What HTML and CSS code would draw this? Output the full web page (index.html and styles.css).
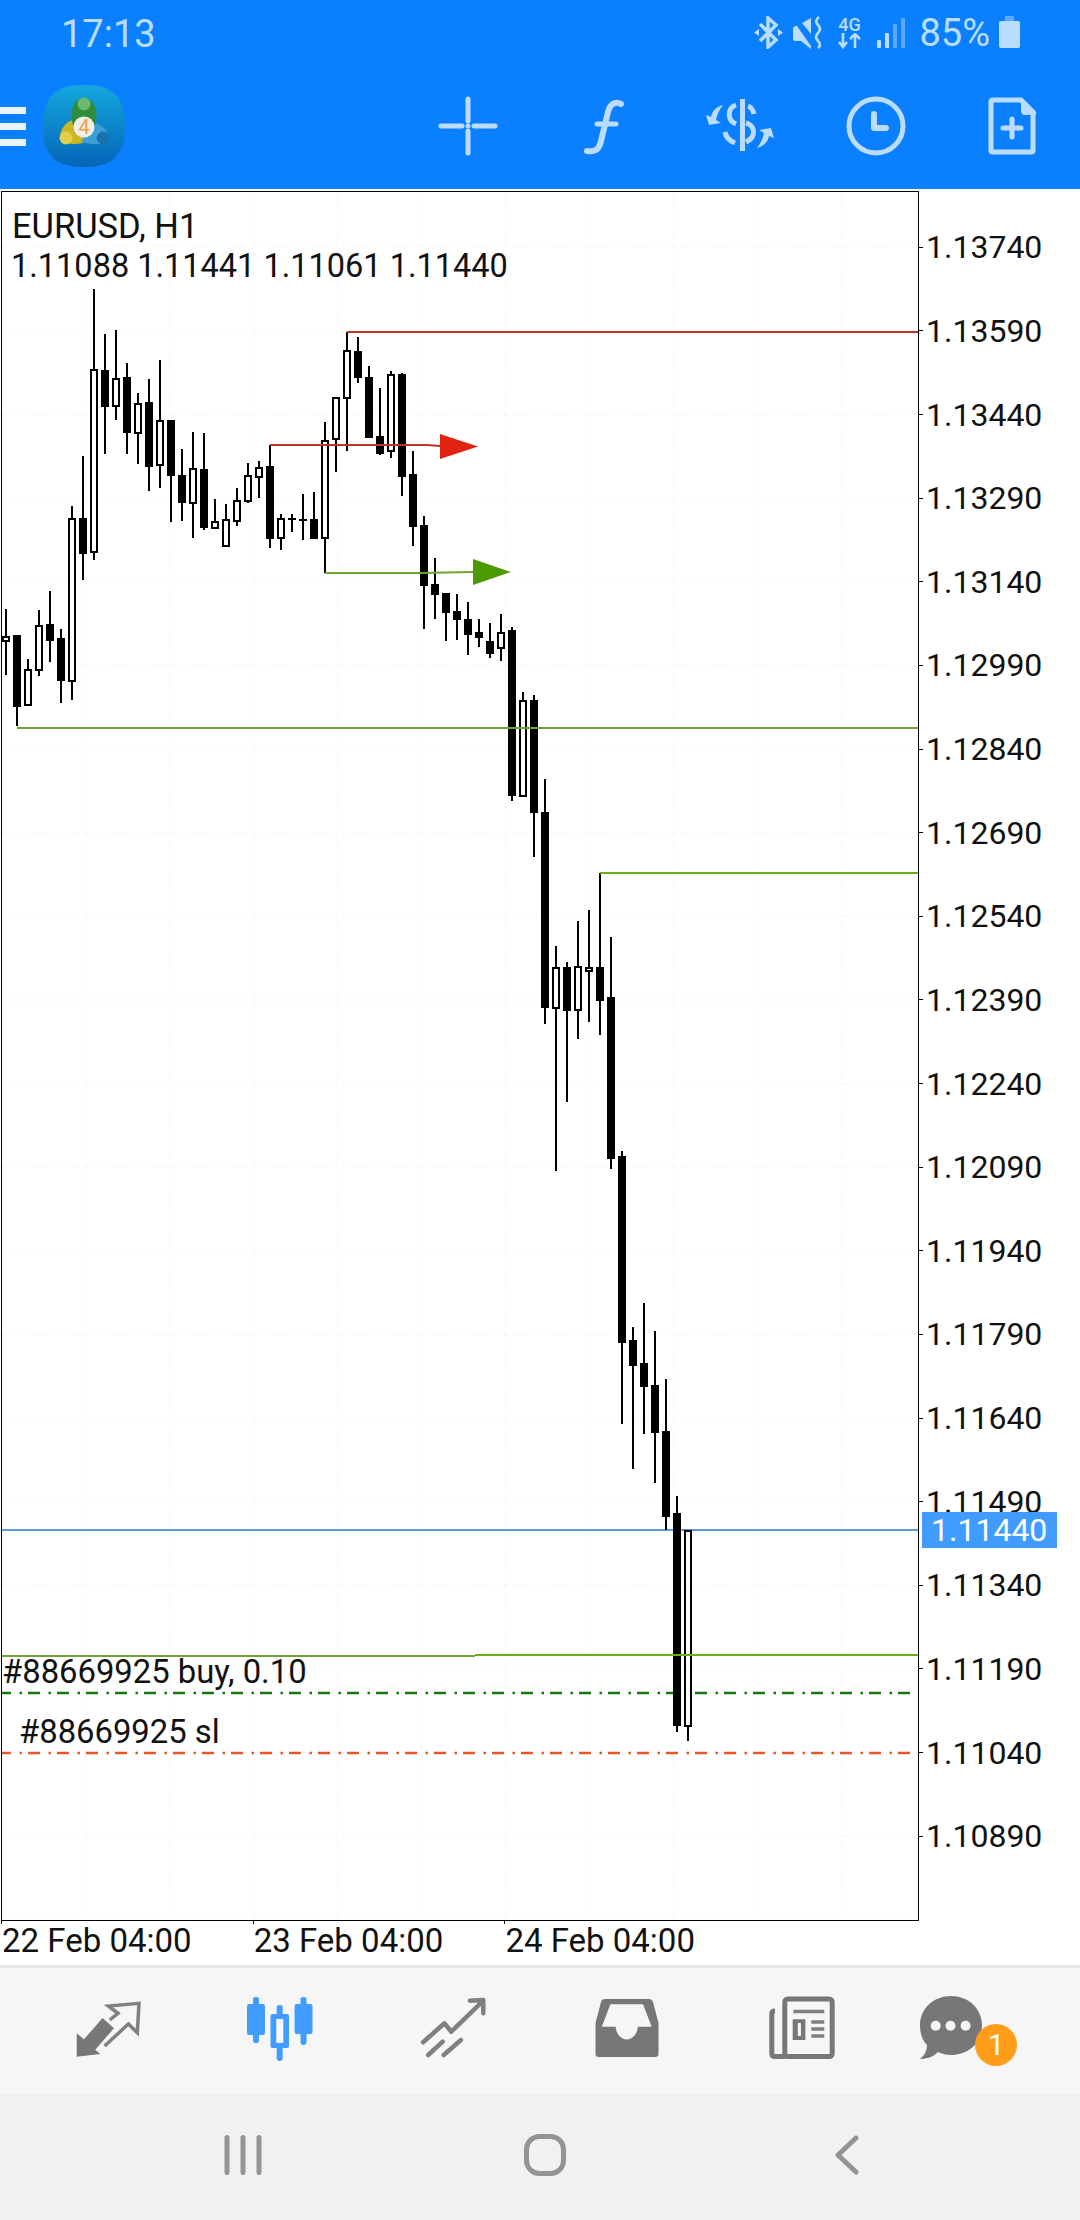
FILE: index.html
```html
<!DOCTYPE html>
<html lang="en">
<head>
    <meta charset="UTF-8">
    <title>EURUSD, H1</title>
    <meta name="viewport" content="width=device-width, initial-scale=1">
    <link rel="stylesheet" href="styles.css">
</head>
<body>
    <div class="status-bar">
        <span class="status-time">17:13</span>
        <div class="status-icons">
            <svg class="icon-bt" viewBox="0 0 30 33" width="30" height="33">
                <path class="st-line" d="M6 8 L22 24 L14 31 V2 L22 9 L6 25"/>
                <path class="st-fill" d="M0 16.5 L5 13 V20Z M29 16.5 L24 13 V20Z"/>
            </svg>
            <svg class="icon-mute" viewBox="0 0 31 33" width="31" height="33">
                <path class="st-fill" d="M1 13 Q1 11 3 10 L5 10 L19 30 V33 L9 25 H3 Q1 25 1 23Z M19 2 V18 L10 7Z"/>
                <path class="st-line thin" d="M27 1 Q22 5 26 9 T26 17 T26 25 T26 32"/>
            </svg>
            <div class="net-type">
                <span>4G</span>
                <svg viewBox="0 0 24 16" width="24" height="16">
                    <path class="st-line thin" d="M6 0 V14 M2 9 L6 14 L10 9 M18 15 V1 M13 6 L18 1 L23 6"/>
                </svg>
            </div>
            <svg class="icon-signal" viewBox="0 0 28 33" width="28" height="33">
                <rect class="st-fill" x="0" y="24" width="4" height="8" rx="1"/>
                <rect class="st-fill" x="8" y="17" width="4" height="15" rx="1"/>
                <rect class="st-dim" x="16" y="8" width="4" height="24" rx="1"/>
                <rect class="st-dim" x="24" y="2" width="4" height="30" rx="1"/>
            </svg>
            <span class="status-batt">85%</span>
            <svg class="icon-batt" viewBox="0 0 21 33" width="21" height="33">
                <path class="st-dim" d="M6 0 H15 V5 H6Z"/>
                <rect class="st-fill" x="0" y="5" width="21" height="27" rx="2"/>
            </svg>
        </div>
    </div>

    <div class="toolbar">
        <div class="menu-btn"><span></span><span></span><span></span></div>
        <svg class="app-logo" viewBox="0 0 82 82" width="82" height="82">
            <defs>
                <linearGradient id="logo-bg" x1="0" y1="0" x2="0" y2="1">
                    <stop offset="0" stop-color="#13a8de"/>
                    <stop offset="1" stop-color="#0564b6"/>
                </linearGradient>
            </defs>
            <path fill="url(#logo-bg)" d="M41 0 C70 0 82 12 82 41 C82 70 70 82 41 82 C12 82 0 70 0 41 C0 12 12 0 41 0Z"/>
            <path fill="#cdb524" d="M30 35 C22 37 17 45 17 52 C20 60 36 61 44 56 L38 44Z"/>
            <circle fill="#e3d04a" cx="23" cy="53" r="6.5"/>
            <path fill="#3d9fd6" d="M53 38 C62 42 67 49 65 55 C60 61 46 60 38 56 L47 45Z"/>
            <circle fill="#1872ad" cx="60" cy="53" r="6.5"/>
            <path fill="#2f8c3f" d="M41 13 C52 13 56 28 52 40 L30 40 C26 28 30 13 41 13Z"/>
            <circle fill="#6cb96f" cx="41" cy="19" r="6.5"/>
            <circle fill="#f1efe9" cx="41" cy="42" r="10.5"/>
            <text class="logo-four" x="41" y="49">4</text>
        </svg>
        <div class="tool-btns">
            <div class="tool-btn">
                <svg viewBox="0 0 70 70" width="70" height="70">
                    <path class="tb-line" d="M35 8 V30 M35 40 V62 M8 35 H29 M41 35 H62"/>
                    <circle class="tb-fill" cx="35" cy="35" r="2.5"/>
                </svg>
            </div>
            <div class="tool-btn">
                <svg viewBox="0 0 70 70" width="70" height="70">
                    <path class="tb-line thick" d="M52 13 C46 10 41 13 39 21 L32 50 C30 59 26 61 18 60"/>
                    <path class="tb-line" d="M28 33 H47"/>
                </svg>
            </div>
            <div class="tool-btn">
                <svg viewBox="0 0 70 70" width="70" height="70">
                    <path class="tb-line flat" d="M37.5 8 V60 M31 14 C22 17 22 29 31 33 M43 15 C46 16 48 19 49 23 M41 32 C50 34 52 46 41 51 M20 41 C21 47 25 50 30 52"/>
                    <path class="tb-fill" d="M18 14 C11 16 7 20 6 26 L1 24 L4 34 L16 32 L11 29 C12 24 14 19 18 14Z"/>
                    <path class="tb-fill" transform="rotate(180 35 35.5)" d="M18 14 C11 16 7 20 6 26 L1 24 L4 34 L16 32 L11 29 C12 24 14 19 18 14Z"/>
                </svg>
            </div>
            <div class="tool-btn">
                <svg viewBox="0 0 70 70" width="70" height="70">
                    <circle class="tb-line" cx="35" cy="35" r="27"/>
                    <path class="tb-line thick" d="M33 23 V37 H45"/>
                </svg>
            </div>
            <div class="tool-btn">
                <svg viewBox="0 0 70 70" width="70" height="70">
                    <path class="tb-line" d="M16 9 H44 L56 21 V59 Q56 61 54 61 H16 Q14 61 14 59 V11 Q14 9 16 9Z"/>
                    <path class="tb-fill" d="M44 6 L59 21 V24 H48 Q44 24 44 20Z"/>
                    <path class="tb-line" d="M35 28 V46 M26 37 H44"/>
                </svg>
            </div>
        </div>
    </div>

    <div class="chart-row">
        <div class="chart-frame">
            <svg id="chart" viewBox="2 192 916 1728" width="916" height="1728">
                <g id="chart-grid"></g>
                <line class="ln-bid" x1="2" y1="1530" x2="918" y2="1530"/>
                <line class="ln-tp" x1="-1" y1="1693" x2="918" y2="1693"/>
                <line class="ln-sl" x1="-1" y1="1753" x2="918" y2="1753"/>
                <g id="chart-candles"></g>
                <line class="ln-red" x1="347" y1="332" x2="918" y2="332"/>
                <path class="ln-red" d="M270 445 H427 L440 446"/>
                <path class="ar-red" d="M440 434 L478 446.5 L440 459Z"/>
                <path class="ln-green-d" d="M325 573 H420 L473 572"/>
                <path class="ar-green" d="M473 559 L511 572 L473 585Z"/>
                <line class="ln-green-d" x1="17" y1="728" x2="918" y2="728"/>
                <line class="ln-green" x1="600" y1="873" x2="918" y2="873"/>
                <line class="ln-green-d" x1="2" y1="1656" x2="475" y2="1656"/>
                <line class="ln-green" x1="475" y1="1655" x2="918" y2="1655"/>
            </svg>
            <div class="chart-label symbol">EURUSD, H1</div>
            <div class="chart-label ohlc">1.11088 1.11441 1.11061 1.11440</div>
            <div class="chart-label order-buy">#88669925 buy, 0.10</div>
            <div class="chart-label order-sl">#88669925 sl</div>
        </div>
        <div class="price-axis">
            <div class="price-row"><i></i>1.13740</div>
            <div class="price-row"><i></i>1.13590</div>
            <div class="price-row"><i></i>1.13440</div>
            <div class="price-row"><i></i>1.13290</div>
            <div class="price-row"><i></i>1.13140</div>
            <div class="price-row"><i></i>1.12990</div>
            <div class="price-row"><i></i>1.12840</div>
            <div class="price-row"><i></i>1.12690</div>
            <div class="price-row"><i></i>1.12540</div>
            <div class="price-row"><i></i>1.12390</div>
            <div class="price-row"><i></i>1.12240</div>
            <div class="price-row"><i></i>1.12090</div>
            <div class="price-row"><i></i>1.11940</div>
            <div class="price-row"><i></i>1.11790</div>
            <div class="price-row"><i></i>1.11640</div>
            <div class="price-row"><i></i>1.11490</div>
            <div class="price-row"><i></i>1.11340</div>
            <div class="price-row"><i></i>1.11190</div>
            <div class="price-row"><i></i>1.11040</div>
            <div class="price-row"><i></i>1.10890</div>
        </div>
        <div class="price-tag">1.11440</div>
    </div>

    <div class="time-axis">
        <div class="time-cell"><i></i>22 Feb 04:00</div>
        <div class="time-cell"><i></i>23 Feb 04:00</div>
        <div class="time-cell"><i></i>24 Feb 04:00</div>
    </div>

    <div class="tab-bar">
        <div class="tab">
            <svg viewBox="0 0 70 70" width="70" height="70">
                <path class="tab-fill" d="M3.7 37.3 L11 43.3 L29.6 22 L40.9 32.3 L22.3 53.7 L27.2 58 L3.7 60.7Z"/>
                <path class="tab-line" d="M31.6 50 L55.4 28 L64.3 36.7 L66 7.3 L35.4 10 L45 17.3 L36.8 24"/>
            </svg>
        </div>
        <div class="tab">
            <svg viewBox="0 0 70 70" width="70" height="70">
                <path class="tab-active" fill-rule="evenodd" d="M7 3 Q7 1 10 1 Q13 1 13 3 V8 H17 Q19 8 19 10 V37 Q19 39 17 39 H13 V45 Q13 47 10 47 Q7 47 7 45 V39 H3 Q1 39 1 37 V10 Q1 8 3 8 H7Z"/>
                <path class="tab-active" fill-rule="evenodd" d="M30.7 11 Q30.7 9 33.7 9 Q36.7 9 36.7 11 V18 H41 Q43 18 43 20 V50 Q43 52 41 52 H36.7 V62 Q36.7 65 33.7 65 Q30.7 65 30.7 62 V52 H26.5 Q24.5 52 24.5 50 V20 Q24.5 18 26.5 18 H30.7Z M30.3 23 V47 H37.3 V23Z"/>
                <path class="tab-active" fill-rule="evenodd" d="M54.5 3 Q54.5 1 57.5 1 Q60.5 1 60.5 3 V8 H64.5 Q66.5 8 66.5 10 V36 Q66.5 38 64.5 38 H60.5 V46 Q60.5 49 57.5 49 Q54.5 49 54.5 46 V38 H50.6 Q48.6 38 48.6 36 V10 Q48.6 8 50.6 8 H54.5Z"/>
            </svg>
        </div>
        <div class="tab">
            <svg viewBox="0 0 70 70" width="70" height="70">
                <path class="tab-line round" d="M3.1 46.3 L24.4 27.3 L31.3 35.7 L62.3 5.7 M49.9 4.7 L63.3 4 V17.3 M8.2 59 L22.7 45.7 M23.7 59 L40.9 44"/>
            </svg>
        </div>
        <div class="tab">
            <svg viewBox="0 0 70 70" width="70" height="70">
                <path class="tab-fill" fill-rule="evenodd" d="M12 3 H56 Q59 3 60 6 L65.5 27 V58 Q65.5 61 62.5 61 H5.5 Q2.5 61 2.5 58 V27 L8 6 Q9 3 12 3Z M17.4 8.3 L8.8 30.7 H22.6 A11.2 14 0 0 0 44.9 30.7 H58.7 L50 8.3Z"/>
            </svg>
        </div>
        <div class="tab">
            <svg viewBox="0 0 70 70" width="70" height="70">
                <rect class="tab-line wide" x="17.8" y="3" width="47.4" height="57.5" rx="3"/>
                <path class="tab-line wide" d="M8 15 Q4.8 15 4.8 18 V57 Q4.8 60.5 8 60.5 H18"/>
                <path class="tab-line" d="M26.4 15.5 H57.3 M44.3 26 H57.3 M44.3 33 H57.3 M44.3 40 H57.3"/>
                <path class="tab-fill" fill-rule="evenodd" d="M25.7 23.3 H38.4 V44 H25.7Z M30.8 27 V40 H33.9 V27Z"/>
            </svg>
        </div>
        <div class="tab tab-chat">
            <svg viewBox="0 0 70 70" width="70" height="70">
                <path class="tab-fill" d="M35 0 C52 0 66 12 66 29.5 C66 47 52 59 35 59 C30 59 26 58 22 56 C17 61 11 63 4 63 C9 59 11 54 11 49 C6 44 4 37 4 29.5 C4 12 18 0 35 0Z"/>
                <circle class="tab-dot" cx="19.7" cy="29.7" r="5"/>
                <circle class="tab-dot" cx="34.5" cy="29.7" r="5"/>
                <circle class="tab-dot" cx="49.6" cy="29.7" r="5"/>
            </svg>
            <span class="tab-badge">1</span>
        </div>
    </div>

    <div class="nav-bar">
        <div class="nav-btn">
            <svg viewBox="0 0 38 40" width="38" height="40">
                <path class="nav-line" d="M3 2.5 V37.5 M19 2.5 V37.5 M35 2.5 V37.5"/>
            </svg>
        </div>
        <div class="nav-btn">
            <svg viewBox="0 0 42 42" width="42" height="42">
                <rect class="nav-line" x="2.5" y="2.5" width="37" height="37" rx="13"/>
            </svg>
        </div>
        <div class="nav-btn">
            <svg viewBox="0 0 24 40" width="24" height="40">
                <path class="nav-line" d="M21 3 L3 20 L21 37"/>
            </svg>
        </div>
    </div>

    <script src="chart.js"></script>
</body>
</html>
```

FILE: styles.css
```css
* {
    box-sizing: border-box;
}
body {
    font-family: Roboto, "Liberation Sans", sans-serif;
    background: #fff;
    color: #111;
    margin: 0;
    padding: 0;
    width: 1080px;
    height: 2220px;
    overflow: hidden;
}
svg {
    display: block;
}

/* status bar */
.status-bar {
    background: #0a80ff;
    color: #b9dcff;
    height: 63px;
    display: flex;
    align-items: center;
    justify-content: space-between;
    padding: 4px 60px 0 61px;
    font-size: 38px;
}
.status-icons {
    display: flex;
    align-items: center;
    margin-top: -2px;
}
.status-icons svg {
    flex: none;
}
.st-fill {
    fill: #b9dcff;
}
.st-dim {
    fill: #5aa9ff;
}
.st-line {
    fill: none;
    stroke: #b9dcff;
    stroke-width: 3.5;
}
.st-line.thin {
    stroke-width: 2.6;
}
.icon-bt {
    margin-right: 8px;
}
.icon-mute {
    margin-right: 14px;
}
.net-type {
    width: 24px;
    height: 33px;
    margin-right: 16px;
    display: flex;
    flex-direction: column;
    align-items: center;
    font-size: 18px;
    line-height: 17px;
    font-weight: 500;
}
.icon-signal {
    margin-right: 14px;
}
.status-batt {
    margin-right: 9px;
}

/* toolbar */
.toolbar {
    background: #0a80ff;
    height: 126px;
    display: flex;
    align-items: center;
}
.menu-btn {
    width: 26px;
    margin-right: 17px;
    display: flex;
    flex-direction: column;
    gap: 9px;
}
.menu-btn span {
    display: block;
    height: 7px;
    background: #eaf4ff;
}
.logo-four {
    fill: #f2a043;
    font-size: 20px;
    text-anchor: middle;
}
.tool-btns {
    margin-left: auto;
    display: flex;
}
.tool-btn {
    width: 136px;
    display: flex;
    justify-content: center;
}
.tb-line {
    fill: none;
    stroke: #bcdcff;
    stroke-width: 5;
    stroke-linecap: round;
    stroke-linejoin: round;
}
.tb-line.thick {
    stroke-width: 6;
}
.tb-line.flat {
    stroke-width: 5;
    stroke-linecap: butt;
}
.tb-fill {
    fill: #bcdcff;
}

/* chart */
.chart-row {
    display: flex;
    margin-top: 2px;
    height: 1730px;
    position: relative;
}
.chart-frame {
    width: 918px;
    height: 1730px;
    margin-left: 1px;
    border: 1px solid #000;
    position: relative;
    flex: none;
}
#chart line, #chart path {
    fill: none;
}
.grid-line {
    stroke: #f7f7f7;
    stroke-width: 1;
    stroke-dasharray: 6 4;
}
.candle {
    shape-rendering: crispEdges;
}
.hollow {
    fill: #fff;
    stroke: #000;
    stroke-width: 2;
}
.ln-bid {
    stroke: #5f9bd8;
    stroke-width: 2;
}
.ln-tp {
    stroke: #13780c;
    stroke-width: 2.5;
    stroke-dasharray: 12 8.5 2.5 6;
}
.ln-sl {
    stroke: #e85628;
    stroke-width: 2.5;
    stroke-dasharray: 12 8.5 2.5 6;
}
#chart .ln-red {
    stroke: #b8362a;
    stroke-width: 2;
}
.ln-green {
    stroke: #6bb015;
    stroke-width: 2;
}
#chart .ln-green-d {
    stroke: #6fa233;
    stroke-width: 2;
}
#chart .ar-red {
    fill: #e0240f;
}
#chart .ar-green {
    fill: #4c9a02;
}
.chart-label {
    position: absolute;
    font-size: 32.5px;
    line-height: 38px;
    white-space: nowrap;
}
.symbol {
    left: 10px;
    top: 15px;
    font-size: 34.5px;
}
.ohlc {
    left: 9px;
    top: 55px;
}
.order-buy {
    left: 0;
    top: 1461px;
    font-size: 32.8px;
}
.order-sl {
    left: 17px;
    top: 1521px;
    font-size: 32.8px;
}

/* price scale */
.price-axis {
    flex: 1;
    padding-top: 14.5px;
    font-size: 32px;
}
.price-row {
    height: 83.63px;
    display: flex;
    align-items: center;
    gap: 3px;
}
.price-row i {
    width: 4px;
    height: 1px;
    background: #000;
}
.price-tag {
    position: absolute;
    left: 922px;
    top: 1321px;
    width: 135px;
    height: 36px;
    background: #409cff;
    color: #fff;
    font-size: 32px;
    line-height: 36px;
    padding-left: 9px;
}

/* time scale */
.time-axis {
    height: 44px;
    display: flex;
    padding-left: 1px;
    font-size: 33px;
}
.time-cell {
    width: 251.7px;
    line-height: 34px;
    padding-left: 1px;
}
.time-cell i {
    display: block;
    width: 1px;
    height: 3px;
    margin-left: -1px;
    background: #000;
}

/* bottom tabs */
.tab-bar {
    height: 129px;
    background: #f6f6f6;
    border-top: 3px solid #e6e6e6;
    padding-left: 21px;
    display: grid;
    grid-template-columns: repeat(6, 173.5px);
    align-items: center;
    justify-items: center;
}
.tab {
    position: relative;
}
.tab-chat {
    margin-right: 48px;
}
.tab-fill {
    fill: #777;
}
.tab-line {
    fill: none;
    stroke: #808080;
    stroke-width: 3.5;
}
.tab-line.round {
    stroke-width: 4.5;
    stroke-linecap: round;
    stroke-linejoin: round;
}
.tab-line.wide {
    stroke: #777;
    stroke-width: 5;
}
.tab-active {
    fill: #409cff;
}
.tab-dot {
    fill: #f6f6f6;
}
.tab-badge {
    position: absolute;
    left: 59px;
    top: 28px;
    width: 42px;
    height: 42px;
    border-radius: 50%;
    background: #ff9d1a;
    color: #fff;
    font-size: 30px;
    line-height: 42px;
    text-align: center;
}

/* android nav */
.nav-bar {
    height: 126px;
    background: #f1f1f1;
    padding: 0 0 4px 92px;
    display: flex;
    align-items: center;
}
.nav-btn {
    width: 302px;
    display: flex;
    justify-content: center;
}
.nav-line {
    fill: none;
    stroke: #949494;
    stroke-width: 5;
    stroke-linecap: round;
    stroke-linejoin: round;
}
```

FILE: chart.js
```js
// one row per bar: high, low, body top, body bottom, black(1) or hollow(0)
// y values are page pixels, bars are 11px apart starting at x=6
const bars = [
    [609,675,636,642,0],[635,726,635,707,1],[659,706,669,706,0],[610,676,625,671,0],
    [591,662,624,641,1],[629,703,638,681,1],[506,700,518,682,0],[456,580,518,554,1],
    [289,560,369,553,0],[334,454,370,407,1],[330,420,378,407,0],[363,454,377,433,1],
    [393,464,403,434,0],[379,491,402,467,1],[360,488,420,466,0],[420,522,420,476,1],
    [449,521,475,503,1],[432,538,468,504,0],[433,530,469,528,1],[499,529,521,529,0],
    [504,547,519,547,0],[488,526,500,522,0],[463,503,475,502,0],[461,498,467,478,0],
    [445,548,466,539,1],[514,550,518,539,0],[514,532,518,520,1],[494,540,519,521,1],
    [492,539,519,539,1],[422,573,440,539,0],[397,472,397,440,0],[332,451,350,399,0],
    [337,383,351,378,1],[366,438,377,438,1],[388,455,436,454,1],[371,458,374,452,0],
    [373,496,374,477,1],[451,546,474,527,1],[516,629,525,586,1],[558,619,584,595,1],
    [593,641,593,613,1],[594,640,611,620,1],[602,655,619,635,1],[619,647,632,638,1],
    [623,658,641,654,1],[614,661,632,649,0],[627,801,630,796,1],[692,797,700,797,0],
    [695,857,700,813,1],[779,1024,812,1008,1],[946,1171,967,1009,0],[962,1102,967,1011,1],
    [921,1039,966,1011,0],[910,1022,967,972,0],[873,1035,967,1001,1],[937,1169,997,1159,1],
    [1151,1424,1156,1343,1],[1327,1469,1340,1366,1],[1303,1434,1363,1387,1],[1331,1483,1385,1433,1],
    [1379,1530,1431,1517,1],[1496,1732,1513,1726,1],[1530,1741,1530,1727,0]
];

const NS = 'http://www.w3.org/2000/svg';

function add(parent, tag, attrs) {
    const el = document.createElementNS(NS, tag);
    for (const k in attrs) el.setAttribute(k, attrs[k]);
    parent.appendChild(el);
}

// faint grid, same spacing as the axis ticks
const grid = document.getElementById('chart-grid');
for (let x = 85.4; x < 918; x += 84) {
    add(grid, 'line', { class: 'grid-line', x1: x, y1: 192, x2: x, y2: 1920 });
}
for (let y = 247.3; y < 1920; y += 83.63) {
    add(grid, 'line', { class: 'grid-line', x1: 2, y1: y, x2: 918, y2: y });
}

const candles = document.getElementById('chart-candles');
bars.forEach((b, i) => {
    const x = 6 + i * 11;
    add(candles, 'rect', { class: 'candle', x: x - 1, y: b[0], width: 2, height: b[1] - b[0] });
    if (b[4]) {
        add(candles, 'rect', { class: 'candle', x: x - 4, y: b[2], width: 8, height: b[3] - b[2] });
    } else {
        add(candles, 'rect', { class: 'candle hollow', x: x - 3, y: b[2] + 1, width: 6, height: b[3] - b[2] - 2 });
    }
});
```
